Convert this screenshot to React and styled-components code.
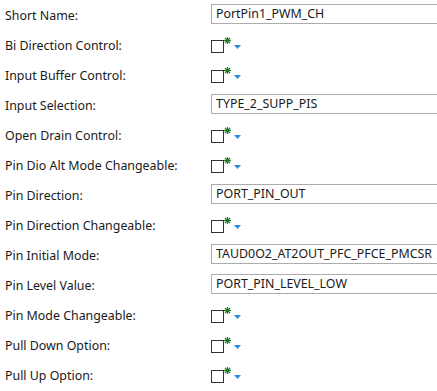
import React from 'react';
import styled, { createGlobalStyle } from 'styled-components';

const GlobalStyle = createGlobalStyle`
  html, body {
    margin: 0;
    padding: 0;
    background: #ffffff;
    overflow: hidden;
  }
  body {
    font-family: "Noto Sans", "Open Sans", sans-serif;
    font-size: 12.4px;
    color: #1a1a1a;
  }
`;

const fields = [
  { label: 'Short Name:', type: 'text', value: 'PortPin1_PWM_CH' },
  { label: 'Bi Direction Control:', type: 'check' },
  { label: 'Input Buffer Control:', type: 'check' },
  { label: 'Input Selection:', type: 'text', value: 'TYPE_2_SUPP_PIS' },
  { label: 'Open Drain Control:', type: 'check' },
  { label: 'Pin Dio Alt Mode Changeable:', type: 'check' },
  { label: 'Pin Direction:', type: 'text', value: 'PORT_PIN_OUT' },
  { label: 'Pin Direction Changeable:', type: 'check' },
  { label: 'Pin Initial Mode:', type: 'text', value: 'TAUD0O2_AT2OUT_PFC_PFCE_PMCSR' },
  { label: 'Pin Level Value:', type: 'text', value: 'PORT_PIN_LEVEL_LOW' },
  { label: 'Pin Mode Changeable:', type: 'check' },
  { label: 'Pull Down Option:', type: 'check' },
  { label: 'Pull Up Option:', type: 'check' },
];

const Form = styled.div`
  display: grid;
  grid-template-columns: 206px 1fr;
  grid-auto-rows: 30px;
  padding: 1px 0 0 5px;
  align-items: center;
`;

const Label = styled.div`
  white-space: nowrap;
  line-height: 14px;
`;

// the field runs on past the right edge, so its right border is never seen
const TextBox = styled.div`
  height: 20px;
  box-sizing: border-box;
  border: 1px solid #acacac;
  border-right: none;
  padding: 0 0 0 4px;
  line-height: 17px;
  margin-bottom: 5px;
  white-space: nowrap;
  overflow: hidden;
`;

const CheckCell = styled.div`
  display: flex;
  align-items: flex-start;
  height: 14px;
`;

const Box = styled.div`
  width: 13px;
  height: 13px;
  box-sizing: border-box;
  border: 1px solid #333333;
  margin-top: 1px;
`;

const Star = styled.svg`
  width: 7px;
  height: 7px;
  margin: -2px 0 0 0;
`;

const Arrow = styled.svg`
  width: 7px;
  height: 4px;
  margin: 6px 0 0 3px;
`;

const ChangedMark = () => (
  <Star viewBox="0 0 7 7">
    <g stroke="#1f7a1f" strokeWidth="1.2">
      <line x1="3.5" y1="0" x2="3.5" y2="7" />
      <line x1="0" y1="3.5" x2="7" y2="3.5" />
      <line x1="1" y1="1" x2="6" y2="6" />
      <line x1="6" y1="1" x2="1" y2="6" />
    </g>
  </Star>
);

const DropArrow = () => (
  <Arrow viewBox="0 0 7 4">
    <polygon points="0,0 7,0 3.5,4" fill="#2a8ce0" />
  </Arrow>
);

export default function App() {
  return (
    <>
      <GlobalStyle />
      <Form>
        {fields.map((f) => (
          <React.Fragment key={f.label}>
            <Label>{f.label}</Label>
            {f.type === 'text' ? (
              <TextBox>{f.value}</TextBox>
            ) : (
              <CheckCell>
                <Box />
                <ChangedMark />
                <DropArrow />
              </CheckCell>
            )}
          </React.Fragment>
        ))}
      </Form>
    </>
  );
}
